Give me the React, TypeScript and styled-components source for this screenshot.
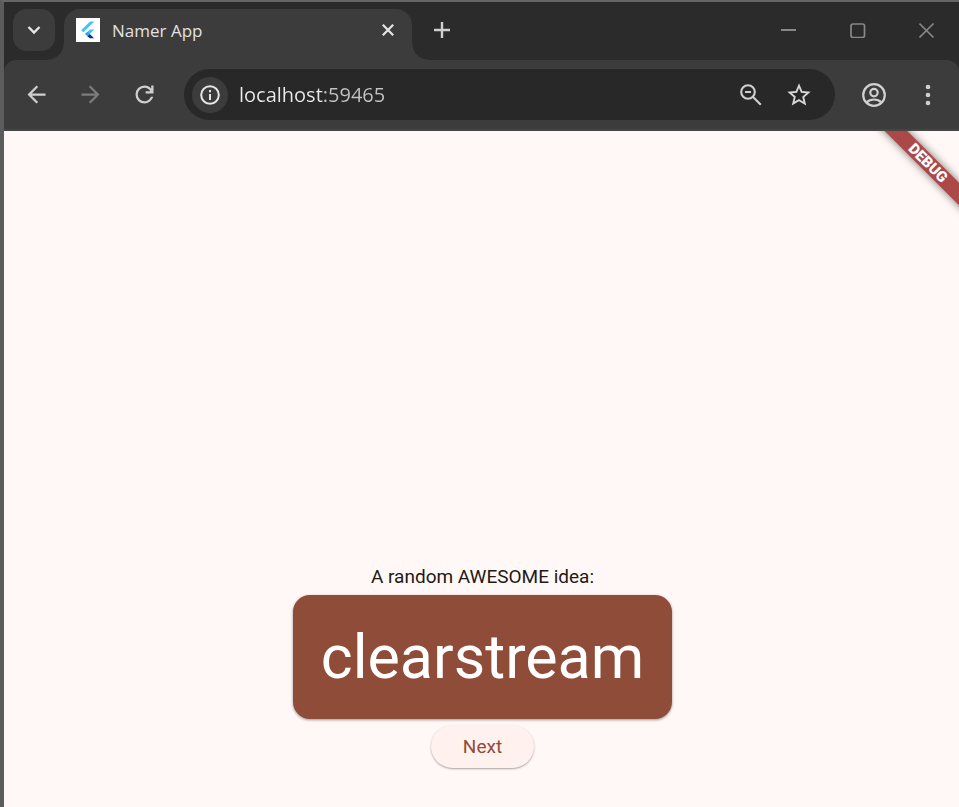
import React, { useState } from "react";
import styled, { createGlobalStyle } from "styled-components";

const GlobalStyle = createGlobalStyle`
  *, *::before, *::after { box-sizing: border-box; }
  body { margin: 0; background: #5c5c5c; }
  button { border: 0; padding: 0; background: none; font: inherit; cursor: pointer; }
`;

const uiFont = `"Open Sans", "Noto Sans", sans-serif`;
const strip = "#2b2b2b";
const chrome = "#3c3c3c";

const Window = styled.div`
  display: flex;
  flex-direction: column;
  min-height: 100vh;
  border-top: 2px solid #666666;
  border-left: 4px solid #5c5c5c;
  background: ${strip};
`;

const TabStrip = styled.header`
  display: flex;
  align-items: flex-start;
  height: 58px;
  padding: 7px 12px 0 9px;
  background: ${strip};
  font-family: ${uiFont};
`;

const TabSearch = styled.button`
  display: grid;
  place-items: center;
  width: 42px;
  height: 42px;
  margin-right: 9px;
  border-radius: 14px;
  background: ${chrome};
`;

const Tab = styled.div`
  position: relative;
  display: flex;
  align-items: flex-start;
  width: 348px;
  height: 51px;
  padding: 9px 14px 0 12px;
  border-radius: 16px 16px 0 0;
  background: ${chrome};

  &::before,
  &::after {
    content: "";
    position: absolute;
    bottom: 0;
    width: 16px;
    height: 16px;
  }
  &::before {
    right: 100%;
    background: radial-gradient(circle at 0 0, transparent 15px, ${chrome} 16px);
  }
  &::after {
    left: 100%;
    background: radial-gradient(circle at 100% 0, transparent 15px, ${chrome} 16px);
  }
`;

const Favicon = styled.svg`
  flex: none;
  width: 24px;
  height: 24px;
`;

const TabTitle = styled.span`
  flex: 1;
  margin-left: 12px;
  color: #e3e3e3;
  font-size: 17px;
  line-height: 26px;
`;

const StripButton = styled.button<{ $width: number }>`
  display: grid;
  place-items: center;
  width: ${(p) => p.$width}px;
  height: ${(p) => (p.$width > 30 ? 42 : 24)}px;
`;

const NewTabSlot = styled.div`
  flex: 1;
  padding-left: 10px;
`;

const WindowControls = styled.div`
  display: flex;
  gap: 29px;
`;

const Toolbar = styled.nav`
  display: flex;
  align-items: center;
  height: 71px;
  padding: 0 12px 0 13px;
  border-bottom: 2px solid #444646;
  border-radius: 12px 12px 0 0;
  background: ${chrome};
`;

const NavButtons = styled.div`
  display: flex;
  gap: 16px;
  margin-right: 21px;
`;

const ToolButton = styled.button`
  display: grid;
  place-items: center;
  width: 38px;
  height: 38px;
`;

const AddressBar = styled.div`
  display: flex;
  flex: 1;
  align-items: center;
  min-width: 0;
  height: 51px;
  padding: 0 22px 0 8px;
  border-radius: 26px;
  background: #282828;
`;

const SiteInfo = styled.button`
  display: grid;
  flex: none;
  place-items: center;
  width: 36px;
  height: 36px;
  border-radius: 50%;
  background: ${chrome};
`;

const Address = styled.input`
  flex: 1;
  min-width: 0;
  height: 32px;
  margin-left: 11px;
  padding: 0;
  border: 0;
  outline: 0;
  background: linear-gradient(90deg, #ececec 84px, #c4c4c4 84px);
  background-clip: text;
  -webkit-background-clip: text;
  color: transparent;
  caret-color: #ececec;
  font-family: ${uiFont};
  font-size: 20px;
`;

const AddressActions = styled.div`
  display: flex;
  gap: 20px;
`;

const AddressButton = styled.button`
  display: grid;
  place-items: center;
  width: 28px;
  height: 28px;
`;

const MenuButtons = styled.div`
  display: flex;
  gap: 16px;
  margin-left: 20px;
`;

const Page = styled.main`
  position: relative;
  display: flex;
  flex: 1;
  flex-direction: column;
  align-items: center;
  justify-content: flex-end;
  overflow: hidden;
  padding: 60px 0 39px 2px;
  background: #fff8f6;
  font-family: Roboto, sans-serif;
`;

const DebugBanner = styled.div`
  position: absolute;
  top: 24px;
  right: -69px;
  width: 200px;
  transform: rotate(45deg);
  background: #ad4848;
  box-shadow: 0 0 9px rgba(0, 0, 0, 0.55);
  color: #ffffff;
  font-size: 15px;
  font-weight: 900;
  line-height: 16px;
  text-align: center;
`;

const Caption = styled.p`
  margin: 0 0 5px;
  color: #231917;
  font-size: 19px;
  line-height: 26px;
`;

const WordCard = styled.h1`
  margin: 0 0 6px;
  padding: 24px 28px;
  border-radius: 17px;
  background: #8f4c38;
  box-shadow: 0 1px 3px rgba(0, 0, 0, 0.4);
  color: #ffffff;
  font-size: 61px;
  font-weight: 400;
  line-height: 76px;
`;

const NextButton = styled.button`
  && {
    height: 43px;
    padding: 0 32px;
    border-radius: 22px;
    background: #fff1ed;
    box-shadow: 0 1px 2px rgba(0, 0, 0, 0.35);
    color: #8f4c38;
    font-size: 19px;
    font-weight: 400;
  }
`;

const ArrowIcon = ({ forward = false }: { forward?: boolean }) => (
  <svg width="27" height="27" viewBox="0 0 24 24" fill={forward ? "#7c7c7c" : "#cfcfcf"} aria-hidden="true">
    <path
      d={
        forward
          ? "M4 11h12.17l-5.59-5.59L12 4l8 8-8 8-1.41-1.41L16.17 13H4z"
          : "M20 11H7.83l5.59-5.59L12 4l-8 8 8 8 1.41-1.41L7.83 13H20z"
      }
    />
  </svg>
);

const ReloadIcon = () => (
  <svg width="27" height="27" viewBox="0 -960 960 960" fill="#cfcfcf" aria-hidden="true">
    <path d="M480-160q-134 0-227-93t-93-227q0-134 93-227t227-93q69 0 132 28.500t108 81.500v-110h80v280H520v-80h168q-32-56-87.500-88T480-720q-100 0-170 70t-70 170q0 100 70 170t170 70q77 0 139-44t87-116h84q-28 106-114 173t-196 67Z" />
  </svg>
);

const InfoIcon = () => (
  <svg width="20" height="20" viewBox="0 0 20 20" fill="none" stroke="#e6e6e6" strokeWidth="2" aria-hidden="true">
    <circle cx="10" cy="10" r="8.800" />
    <path d="M10 9v6M10 5v2.200" />
  </svg>
);

const ZoomOutIcon = () => (
  <svg width="22" height="22" viewBox="0 0 22 22" fill="none" stroke="#cfcfcf" strokeWidth="2.100" aria-hidden="true">
    <circle cx="8" cy="8" r="6.800" />
    <path d="M5 8h6M12.800 12.800l8 8" />
  </svg>
);

const StarIcon = () => (
  <svg width="28" height="28" viewBox="0 0 24 24" fill="#d6d6d6" aria-hidden="true">
    <path d="M22 9.240l-7.190-.62L12 2 9.190 8.630 2 9.240l5.460 4.730L5.820 21 12 17.270 18.180 21l-1.630-7.030L22 9.240zM12 15.400l-3.760 2.270 1-4.280-3.320-2.880 4.380-.38L12 6.100l1.710 4.040 4.380.38-3.320 2.880 1 4.280L12 15.400z" />
  </svg>
);

const ProfileIcon = () => (
  <svg width="24" height="24" viewBox="0 0 24 24" fill="none" stroke="#d0d0d0" strokeWidth="2.200" aria-hidden="true">
    <circle cx="12" cy="12" r="10.800" />
    <circle cx="12" cy="9.600" r="3.700" />
    <path d="M4.500 19.500c4-4 11-4 15 0" />
  </svg>
);

const MoreIcon = () => (
  <svg width="6" height="22" viewBox="0 0 6 22" fill="#d0d0d0" aria-hidden="true">
    <circle cx="3" cy="3" r="2.300" />
    <circle cx="3" cy="11" r="2.300" />
    <circle cx="3" cy="19" r="2.300" />
  </svg>
);

const FlutterIcon = () => (
  <Favicon viewBox="0 0 24 24" aria-hidden="true">
    <path d="M0 0h24v24H0z" fill="#ffffff" />
    <path d="M14 3.500h4.300L7.400 14.300 5.200 12.200z" fill="#42c4fb" />
    <path d="M14 11.500h4.300l-4.600 4.600-4.500 0z" fill="#42c4fb" />
    <path d="M9 16l2.400-2.300 2.500 2.400-2.500 2.200z" fill="#29a7ee" />
    <path d="M11.400 18.300l2.400-2.200 4.300 4.200h-4.200z" fill="#072f91" />
  </Favicon>
);

const words = ["clearstream", "newstay", "lightstream", "mapstream"];

export default function App() {
  const [index, setIndex] = useState(0);
  return (
    <>
      <GlobalStyle />
      <Window>
        <TabStrip>
          <TabSearch aria-label="Search tabs">
            <svg width="14" height="10" viewBox="0 0 14 10" fill="none" stroke="#e6e6e6" strokeWidth="2.400" aria-hidden="true">
              <path d="M1.500 2L7 7.500 12.500 2" />
            </svg>
          </TabSearch>
          <Tab>
            <FlutterIcon />
            <TabTitle>Namer App</TabTitle>
            <StripButton $width={20} aria-label="Close tab">
              <svg width="12" height="12" viewBox="0 0 12 12" fill="none" stroke="#e6e6e6" strokeWidth="2.200" aria-hidden="true">
                <path d="M.8.8l10.400 10.400M11.200.8L.8 11.200" />
              </svg>
            </StripButton>
          </Tab>
          <NewTabSlot>
            <StripButton $width={40} aria-label="New tab">
              <svg width="16" height="16" viewBox="0 0 16 16" fill="none" stroke="#cfcfcf" strokeWidth="2.400" aria-hidden="true">
                <path d="M8 0v16M0 8h16" />
              </svg>
            </StripButton>
          </NewTabSlot>
          <WindowControls>
            <StripButton $width={40} aria-label="Minimize">
              <svg width="16" height="16" viewBox="0 0 16 16" stroke="#888888" strokeWidth="2" aria-hidden="true">
                <path d="M0 8h15" />
              </svg>
            </StripButton>
            <StripButton $width={40} aria-label="Maximize">
              <svg width="16" height="16" viewBox="0 0 16 16" fill="none" stroke="#888888" strokeWidth="1.700" aria-hidden="true">
                <rect x="1" y="2" width="13.500" height="13.500" rx="2" />
              </svg>
            </StripButton>
            <StripButton $width={40} aria-label="Close window">
              <svg width="16" height="16" viewBox="0 0 16 16" fill="none" stroke="#888888" strokeWidth="1.600" aria-hidden="true">
                <path d="M.5 1.500l14 14M14.500 1.500l-14 14" />
              </svg>
            </StripButton>
          </WindowControls>
        </TabStrip>
        <Toolbar aria-label="Browser toolbar">
          <NavButtons>
            <ToolButton aria-label="Back"><ArrowIcon /></ToolButton>
            <ToolButton aria-label="Forward"><ArrowIcon forward /></ToolButton>
            <ToolButton aria-label="Reload"><ReloadIcon /></ToolButton>
          </NavButtons>
          <AddressBar>
            <SiteInfo aria-label="View site information"><InfoIcon /></SiteInfo>
            <Address aria-label="Address" defaultValue="localhost:59465" spellCheck={false} />
            <AddressActions>
              <AddressButton aria-label="Zoom"><ZoomOutIcon /></AddressButton>
              <AddressButton aria-label="Bookmark this tab"><StarIcon /></AddressButton>
            </AddressActions>
          </AddressBar>
          <MenuButtons>
            <ToolButton aria-label="Profile"><ProfileIcon /></ToolButton>
            <ToolButton aria-label="Menu"><MoreIcon /></ToolButton>
          </MenuButtons>
        </Toolbar>
        <Page>
          <DebugBanner>DEBUG</DebugBanner>
          <Caption>A random AWESOME idea:</Caption>
          <WordCard>{words[index]}</WordCard>
          <NextButton onClick={() => setIndex((index + 1) % words.length)}>Next</NextButton>
        </Page>
      </Window>
    </>
  );
}
